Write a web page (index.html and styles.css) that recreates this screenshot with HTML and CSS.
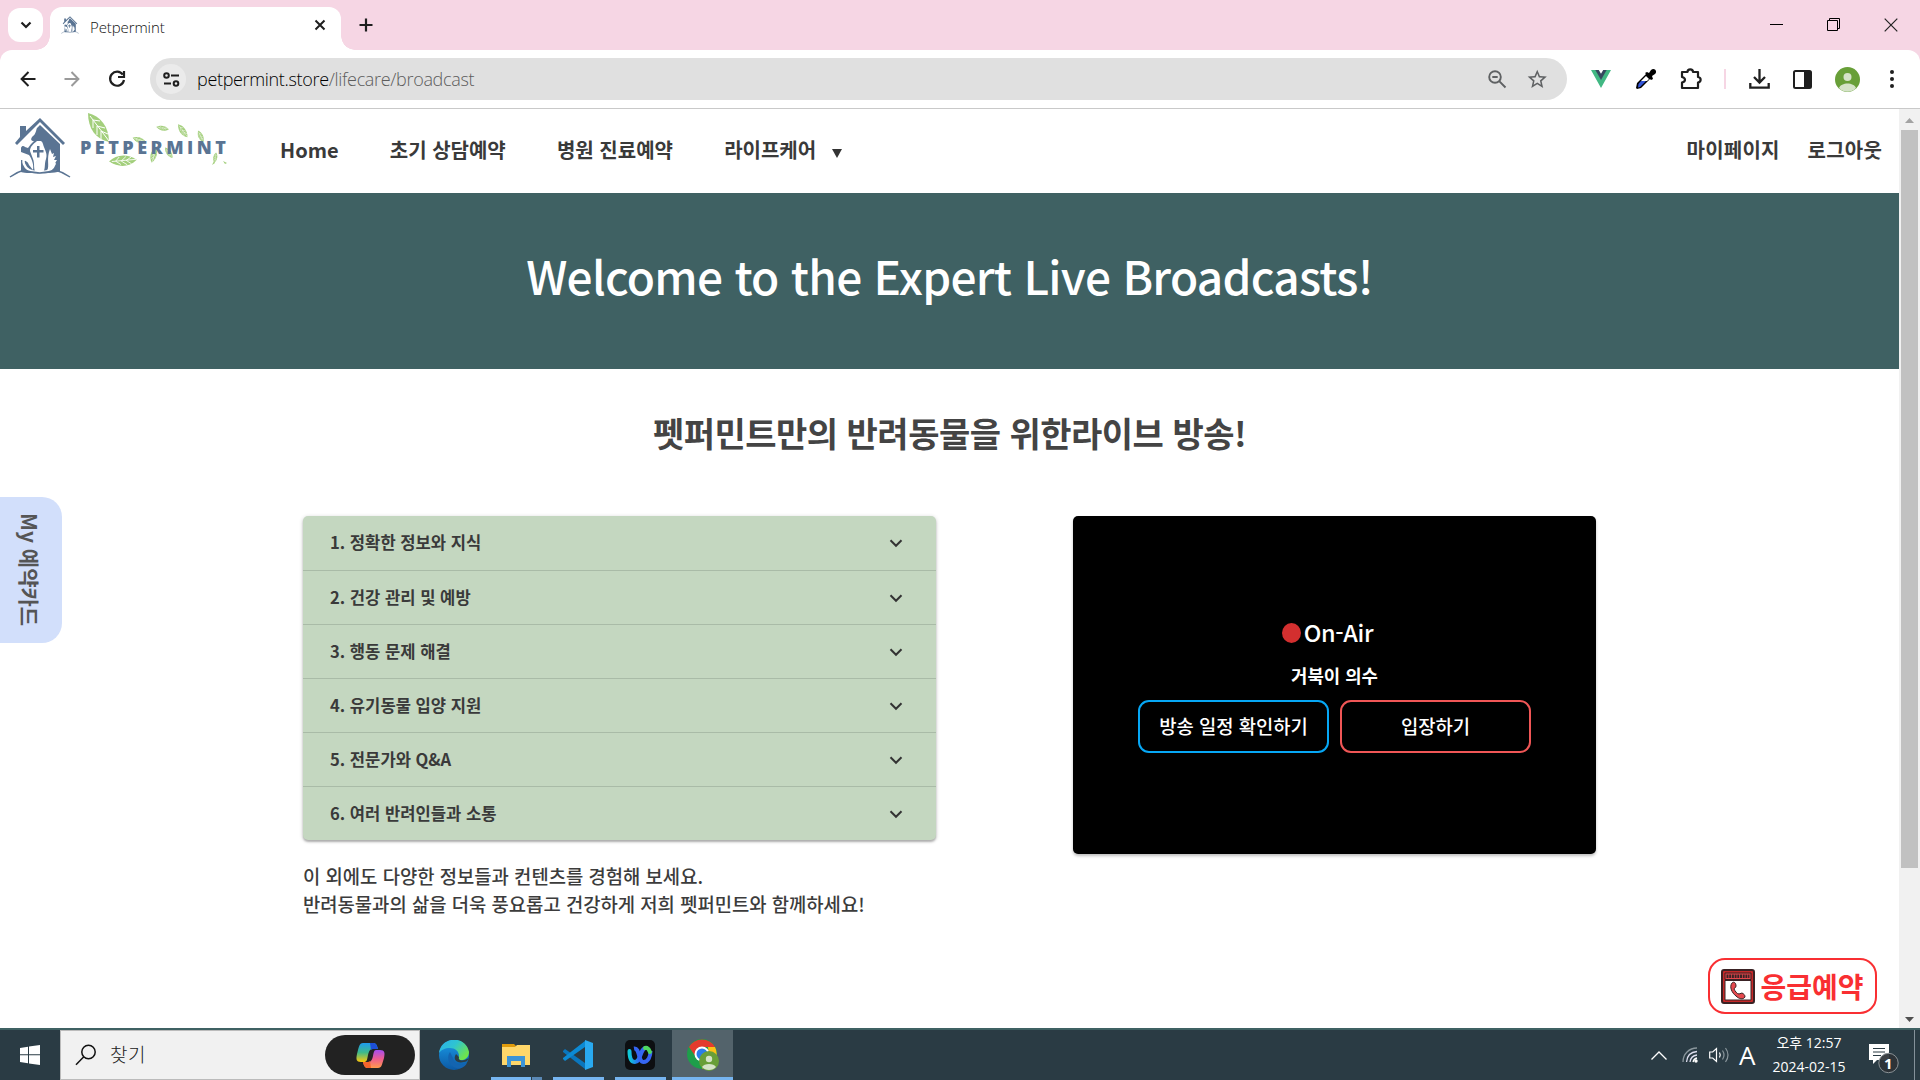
FILE: index.html
```html
<!DOCTYPE html>
<html lang="ko">
<head>
<meta charset="utf-8">
<title>Petpermint</title>
<link rel="stylesheet" href="styles.css">
</head>
<body>
<svg class="defs" width="0" height="0">
  <defs>
    <symbol id="house" viewBox="0 0 62 60">
      <path fill="#5a7493" d="M11 19V8h6v5L31 0l25 25-2 2L31 4 8 27l-2-2z"/>
      <path fill="#5a7493" d="M31 7 51 26v27c-3 3-36 3-39 1V30c1-3 3-2 4-1l3 1 3-4 3-3c-3 0-4-2-1-5 3-2 3-6 4-8z"/>
      <path fill="#fff" d="M28 23c3 0 5-1 6 3 1 5 5 9 3 15-2 5 0 12-4 14h-6c-3-4-1-9-3-14l-3-8c0-4 3-7 7-10z"/>
      <path fill="#5a7493" d="M28 28h2.500v4h4v2.500h-4v5H28v-5h-4V32h4z"/>
      <path fill="#fff" d="M12 34l8 3c3 4 5 10 4 15l-4-5c-1-4-5-5-8-5z"/>
      <path fill="none" stroke="#fff" stroke-width="2.400" d="M21 42c-3-4-8-1-6 4 2 5 7 8 13 8M33 54c6 0 11-3 13-9"/>
      <path fill="#fff" d="M41 31l2 5 2-1-1 4 3-1-2 4 3 0-3 5-3 6h-4c3-5-1-12 3-22z"/>
      <path fill="none" stroke="#5a7493" stroke-width="1.500" d="M1 59Q8 54 15 52Q31 58 46 52Q54 54 61 59"/>
    </symbol>
    <symbol id="leaf" viewBox="0 0 22 30">
      <path fill="#a3cf7c" d="M0 0C12 3 21 13 21 29 8 26 0 16 0 0z"/>
      <path fill="none" stroke="#fff" stroke-width="1" d="M2 3 21 28M5 7v8M5 7l7 1M9 13v9M9 13l8 2M13 18v8M13 18l7 3"/>
    </symbol>
    <symbol id="chev" viewBox="0 0 14 10"><path fill="none" stroke="#333" stroke-width="2" d="M1.500 2.300 7 7.800l5.500-5.500"/></symbol>
    <linearGradient id="edgeA" x1="0" y1="0" x2="1" y2=".6"><stop stop-color="#2ab0f0"/><stop offset=".5" stop-color="#2fc4d0"/><stop offset="1" stop-color="#6fe54a"/></linearGradient>
    <linearGradient id="edgeB" x1="0" y1="0" x2="0" y2="1"><stop stop-color="#1a9be8"/><stop offset="1" stop-color="#0c59a4"/></linearGradient>
    <linearGradient id="copA" x1="0" y1="0" x2="0" y2="1"><stop stop-color="#1d9bf0"/><stop offset=".5" stop-color="#3fb98a"/><stop offset="1" stop-color="#ffc808"/></linearGradient>
    <linearGradient id="copB" x1="0" y1="0" x2="0" y2="1"><stop stop-color="#a44cf0"/><stop offset=".5" stop-color="#ee5d8e"/><stop offset="1" stop-color="#ff9a4c"/></linearGradient>
    <linearGradient id="webA" x1="0" y1="0" x2="1" y2="0"><stop stop-color="#10c8d8"/><stop offset=".55" stop-color="#2a6cf5"/><stop offset="1" stop-color="#3f63f0"/></linearGradient>
  </defs>
</svg>

<header class="tabstrip">
  <button class="tab-search"><svg width="12" height="8" viewBox="0 0 12 8"><path d="M1.500 1.500 6 6l4.500-4.500" fill="none" stroke="#1f1f1f" stroke-width="2.200"/></svg></button>
  <div class="tab">
    <svg class="favicon" width="18" height="18"><use href="#house"/></svg>
    <span class="tab-title">Petpermint</span>
    <svg width="12" height="12" viewBox="0 0 12 12"><path d="M1.500 1.500l9 9m0-9l-9 9" stroke="#1f1f1f" stroke-width="2"/></svg>
  </div>
  <svg class="newtab" width="14" height="14" viewBox="0 0 14 14"><path d="M7 .5v13M.5 7h13" stroke="#1f1f1f" stroke-width="2.200"/></svg>
  <div class="winctl">
    <svg width="14" height="14" viewBox="0 0 14 14"><path d="M0 6.500h13" stroke="#000"/></svg>
    <svg width="14" height="14" viewBox="0 0 14 14"><path d="M.5 2.500h10v10H.5zM2.500 2.500v-2h10v10h-2" fill="none" stroke="#000"/></svg>
    <svg width="14" height="14" viewBox="0 0 14 14"><path d="M.7.7l12.600 12.600m0-12.600L.7 13.300" stroke="#222" stroke-width="1.200"/></svg>
  </div>
</header>

<div class="toolbar-bg">
<div class="toolbar">
  <div class="navbtns">
    <svg width="16" height="16" viewBox="0 0 16 16"><path d="M8.500 1 1.600 8l6.900 7M1.600 8H15.500" fill="none" stroke="#1f1f1f" stroke-width="2"/></svg>
    <svg width="16" height="16" viewBox="0 0 16 16"><path d="M7.500 1l6.900 7-6.900 7M14.400 8H.5" fill="none" stroke="#9a9a9a" stroke-width="2"/></svg>
    <svg width="18" height="18" viewBox="0 0 18 18"><path d="M14.800 4.600A7 7 0 1 0 16 10" fill="none" stroke="#1f1f1f" stroke-width="2.200"/><path d="M16 1v6h-6" fill="none" stroke="#1f1f1f" stroke-width="2.200"/></svg>
  </div>
  <div class="omnibox">
    <span class="siteinfo"><svg width="17" height="15" viewBox="0 0 17 15" fill="none" stroke="#1f1f1f" stroke-width="2"><circle cx="3.500" cy="3.500" r="2.300"/><path d="M8 3.500h8M1 11.500h7"/><circle cx="13" cy="11.500" r="2.300"/></svg></span>
    <span class="url">petpermint.store<span class="path">/lifecare/broadcast</span></span>
    <svg width="19" height="19" viewBox="0 0 19 19" fill="none" stroke="#5f6163" stroke-width="1.900"><circle cx="7" cy="7" r="5.800"/><path d="M11.200 11.200 17.500 17.500M4.300 7h5.400"/></svg>
    <svg class="star" width="20" height="20" viewBox="0 0 24 24"><path fill="#5f6163" d="M22 9.240l-7.190-.62L12 2 9.190 8.630 2 9.240l5.460 4.730L5.820 21 12 17.270 18.180 21l-1.630-7.030L22 9.240zM12 15.400l-3.760 2.270 1-4.280-3.320-2.880 4.380-.38L12 6.100l1.710 4.040 4.380.38-3.320 2.880 1 4.280L12 15.400z" transform="translate(-1.500 -1.500) scale(1.150)"/></svg>
  </div>
  <div class="ext">
    <svg width="22" height="20" viewBox="0 0 22 20"><path fill="#41b883" d="M1 1h5l5 9 5-9h5L11 19z"/><path fill="#35495e" d="M5.300 1h3.500L11 4.800 13.200 1h3.500L11 11z"/></svg>
    <svg width="22" height="22" viewBox="0 0 22 22"><path fill="#000" d="M12 4l2 1 2-3c3-3 7 1 4 4l-3 2 1 3-2 1-1-1L6 20l-4 1-1-1 1-5 9-9-1-1z"/><path fill="#fff" d="M11 8l3 3-2 2H6z"/><path fill="#3355d8" d="M6 13h5l-6 6-2 .500.500-3.500z"/></svg>
    <svg width="22" height="22" viewBox="0 0 22 22"><path d="M2 4h5.500c0-3.500 5.500-3.500 5.500 0h5v5c3.500.5 3.500 5 0 5.500V20H2v-5.500c4-1 4-4.500 0-5.500z" fill="none" stroke="#1f1f1f" stroke-width="2.200" stroke-linejoin="round"/></svg>
    <span class="sep"></span>
    <svg width="21" height="20" viewBox="0 0 21 20"><path d="M10.500 0v13M5 8l5.500 5.500L16 8M1.300 14v4.700h18.400V14" fill="none" stroke="#1f1f1f" stroke-width="2.300"/></svg>
    <svg width="19" height="19" viewBox="0 0 19 19"><rect x="1" y="1" width="17" height="17" rx="1.500" fill="#fff" stroke="#1f1f1f" stroke-width="2"/><path fill="#1f1f1f" d="M11 1h7v17h-7z"/></svg>
    <svg width="25" height="25" viewBox="0 0 25 25"><circle cx="12.500" cy="12.500" r="12.500" fill="#689f38"/><circle cx="12.500" cy="10" r="4" fill="#d5e3c8"/><path fill="#d5e3c8" d="M4 21c2-6 15-6 17 0-4 5-13 5-17 0z"/></svg>
    <svg class="dots" width="4" height="18" viewBox="0 0 4 18" fill="#1f1f1f"><circle cx="2" cy="2" r="2"/><circle cx="2" cy="9" r="2"/><circle cx="2" cy="16" r="2"/></svg>
  </div>
</div>
</div>

<div class="viewport">
  <div class="page">
    <nav class="nav">
      <svg class="logo" width="240" height="80" viewBox="0 0 240 80">
        <use href="#house" x="9" y="9" width="62" height="60"/>
        <use href="#leaf" x="88" y="4" width="22" height="30"/>
        <use href="#leaf" width="18" height="27" transform="translate(108 52) rotate(-58) scale(.95)"/>
        <use href="#leaf" width="8" height="14" transform="translate(155 17) rotate(-45)"/>
        <use href="#leaf" width="10" height="16" transform="translate(178 14)"/>
        <use href="#leaf" width="9" height="14" transform="translate(132 28) rotate(-35)"/>
        <use href="#leaf" width="10" height="17" transform="translate(157 37) rotate(50)"/>
        <use href="#leaf" width="8" height="12" transform="translate(198 21) rotate(10)"/>
        <use href="#leaf" width="8" height="12" transform="translate(165 38)"/>
        <use href="#leaf" width="7" height="9" transform="translate(216 43) rotate(45)"/>
        <path fill="#a3cf7c" d="M212 56l2-4 1 2zM223 52l4 2-2 1z"/>
        <text class="logo-text" x="80" y="45" textLength="146">PETPERMINT</text>
      </svg>
      <div class="menu"><a>Home</a><a>초기 상담예약</a><a>병원 진료예약</a><a class="drop">라이프케어<svg width="10" height="10" viewBox="0 0 10 10"><path fill="#333" d="M0 1h10L5 10z"/></svg></a></div>
      <div class="user"><a>마이페이지</a><a>로그아웃</a></div>
    </nav>
    <section class="hero"><h1>Welcome to the Expert Live Broadcasts!</h1></section>
    <main>
      <h2>펫퍼민트만의 반려동물을 위한라이브 방송!</h2>
      <div class="cols">
        <div class="left">
          <ul class="accordion">
            <li><span>1. 정확한 정보와 지식</span><svg width="14" height="10"><use href="#chev"/></svg></li>
            <li><span>2. 건강 관리 및 예방</span><svg width="14" height="10"><use href="#chev"/></svg></li>
            <li><span>3. 행동 문제 해결</span><svg width="14" height="10"><use href="#chev"/></svg></li>
            <li><span>4. 유기동물 입양 지원</span><svg width="14" height="10"><use href="#chev"/></svg></li>
            <li><span>5. 전문가와 Q&amp;A</span><svg width="14" height="10"><use href="#chev"/></svg></li>
            <li><span>6. 여러 반려인들과 소통</span><svg width="14" height="10"><use href="#chev"/></svg></li>
          </ul>
          <p class="note"><span>이 외에도 다양한 정보들과 컨텐츠를 경험해 보세요.</span><br><span>반려동물과의 삶을 더욱 풍요롭고 건강하게 저희 펫퍼민트와 함께하세요!</span></p>
        </div>
        <div class="player">
          <div class="onair"><i></i><span>On-Air</span></div>
          <strong class="show">거북이 의수</strong>
          <div class="btns"><button class="b1">방송 일정 확인하기</button><button class="b2">입장하기</button></div>
        </div>
      </div>
    </main>
    <div class="mycard"><span>My 예약카드</span></div>
    <button class="emergency">
      <svg width="34" height="35" viewBox="0 0 34 35"><rect x="1" y="1" width="32" height="33" rx="2" fill="#c62828" stroke="#3a2224" stroke-width="2"/><path fill="#fff" stroke="#3a2224" d="M4 11.500h26V31H4z"/><path fill="#e5484d" stroke="#3a2224" d="M4 4h26v6.500H4z"/><path stroke="#3a2224" stroke-width="3.500" stroke-dasharray="2 .700" d="M5.500 7.200h23"/><path fill="#e5484d" stroke="#3a2224" d="M11 14c2-2 4 0 4 3 0 2-2 2-2 3 1 2 3 5 5 5l3-1c2 1 3 2 3 4-2 3-6 2-9-1-4-3-7-9-4-13z"/></svg>
      <span>응급예약</span>
    </button>
  </div>
  <div class="scroll"><svg width="9" height="5" viewBox="0 0 9 5"><path fill="#a3a3a3" d="M0 5 4.500 0 9 5z"/></svg><div class="thumb"></div><svg class="down" width="9" height="5" viewBox="0 0 9 5"><path fill="#505050" d="M0 0h9L4.500 5z"/></svg></div>
</div>

<footer class="taskbar">
  <div class="start"><svg width="20" height="20" viewBox="0 0 20 20" fill="#fff"><path d="M0 3l8-1.200V9.300H0zM9 1.600 20 0v9.300H9zM0 10.300h8v7.900L0 17zM9 10.300h11V20L9 18.400z"/></svg></div>
  <div class="search">
    <svg width="22" height="22" viewBox="0 0 22 22" fill="none" stroke="#111" stroke-width="1.500"><circle cx="13.500" cy="8" r="6.700"/><path d="M8.800 12.800 1 20.800"/></svg>
    <span>찾기</span>
    <div class="copilot"><svg width="29" height="27" viewBox="0 0 29 27"><path fill="url(#copA)" d="M7 1h10c3 0 4 2 5 6h-5c-3 0-4 2-5 6-1 5-1 7-4 7H5c-5 0-5-3-4-8C3 5 3 1 7 1z"/><path fill="#1d4fd8" d="M14 1h3c3 0 4 2 5 6h-5c-1 0-2 1-2 1z"/><path fill="url(#copB)" d="M22 26H12c-3 0-4-2-5-6h5c3 0 4-2 5-6 1-5 1-6 4-6h3c5 0 5 3 4 8-2 6-2 10-6 10z"/><path fill="#f4642c" d="M15 26h-3c-3 0-4-2-5-6h5c1 0 2-1 2-1z"/></svg></div>
  </div>
  <div class="apps">
    <div class="app"><svg width="30" height="30" viewBox="0 0 30 30"><circle cx="15" cy="15" r="15" fill="url(#edgeB)"/><path fill="url(#edgeA)" d="M0 13C2-4 27-5 30 12c0 6-5 9-10 8-2-1-1-2 0-4 0-5-4-8-9-8C6 8 2 10 0 13z"/><path fill="#1464b0" d="M11 12c-5 7 1 18 11 16 3-1 5-3 6-5-6 4-13 1-14-5z"/><path fill="#2c3d46" d="M17 14c-4 6 2 11 11 7l2-3-4 2c-4 1-7 0-6-3z"/></svg></div>
    <div class="app run split"><svg width="28" height="26" viewBox="0 0 28 26"><path fill="#e09b0c" d="M0 2h12l3 3H0z"/><path fill="#ffd76a" d="M0 5h13l2-2h13v20H0z"/><path fill="#3d94d6" d="M5 25V14h18v11h-4v-6H9v6z"/></svg></div>
    <div class="app run"><svg width="30" height="30" viewBox="0 0 30 30"><path fill="#0a76bd" d="M0 11l2-2 20 14v6L0 12z"/><path fill="#0c8ad4" d="M0 19l2 2L22 7V1L0 18z"/><path fill="#29a9f0" d="M22 0l8 3v24l-8 3z"/></svg></div>
    <div class="app run"><svg width="30" height="30" viewBox="0 0 30 30"><rect width="30" height="30" rx="5" fill="#0d0f12"/><path fill="none" stroke="url(#webA)" stroke-width="4" stroke-linecap="round" d="M4.500 11c0 7 2 11 5.500 11 6 0 5-14 11-14"/><path fill="none" stroke="#3565f2" stroke-width="4" d="M9 8.500c6-1 4 13.500 9.500 13.500 5 0 7-6 7-11"/><path fill="none" stroke="#4fd860" stroke-width="4" stroke-linecap="round" d="M20 8c3-1 4 2 5 4"/></svg></div>
    <div class="app run active"><svg width="32" height="32" viewBox="0 0 32 32"><circle cx="15" cy="15" r="15" fill="#1e9e4a"/><path fill="#e33b2e" d="M2 8a15 15 0 0 1 26 0H15l-6 10z"/><path fill="#fbc116" d="M28 8a15 15 0 0 1-13 22l7-12-1-10z"/><circle cx="15" cy="15" r="7.500" fill="#fff"/><circle cx="15" cy="15" r="5.500" fill="#2a7de9"/><circle cx="22" cy="22" r="10" fill="#689f38"/><circle cx="22" cy="20" r="3.200" fill="#d5e3c8"/><path fill="#d5e3c8" d="M15 28c2-4 12-4 14 0-3 4-11 4-14 0z"/></svg></div>
  </div>
  <div class="tray">
    <svg width="16" height="9" viewBox="0 0 16 9"><path d="M.5 8.500 8 1l7.500 7.500" fill="none" stroke="#fff" stroke-width="1.300"/></svg>
    <svg class="wifi" width="17" height="16" viewBox="0 0 17 16" fill="none" stroke-width="1.300"><path stroke="#8a969c" d="M1 15C1 7 7 1 15 1"/><path stroke="#dde" d="M4.500 15C5 9 9 5 15 4.500M8 15c.5-4 3-6.500 7-7"/><path stroke="#fff" d="M11 15c.5-2 2-3.500 4-4"/><circle cx="14" cy="14" r="1.700" fill="#fff"/></svg>
    <svg class="spk" width="20" height="16" viewBox="0 0 20 16" fill="none" stroke="#fff" stroke-width="1.200"><path d="M.7 5h3L7.500 1.500v13L3.700 11h-3zM10.500 5.500q1.500 2.500 0 5"/><path stroke="#8a969c" d="M13.500 3.500q3 4.500 0 9M16.500 1q5 7 0 14"/></svg>
    <span class="ime">A</span>
    <div class="clock"><span>오후 12:57</span><span>2024-02-15</span></div>
    <div class="notif"><svg width="30" height="31" viewBox="0 0 30 31"><path fill="#fff" d="M0 1h20v16H8l-4 4v-4H0z"/><path stroke="#2a3a43" stroke-width="1.200" d="M4 5.500h12M4 9h12M4 12.500h8"/><circle cx="19.500" cy="20" r="9.700" fill="#2d3337" fill-opacity=".93" stroke="#8b9296"/></svg><span class="badge">1</span></div>
    <i class="edge"></i>
  </div>
</footer>
</body>
</html>
```

FILE: styles.css
```css
* { box-sizing: border-box; }
body {
  margin: 0; width: 1920px; height: 1080px; overflow: hidden;
  display: flex; flex-direction: column; background: #fff; color: #3c3c3c;
  font-family: "Noto Sans CJK KR", sans-serif;
}
svg { display: block; flex: none; }
.defs { position: absolute; }
button { font: inherit; color: inherit; border: 0; background: none; padding: 0; }
ul, h1, h2, p { margin: 0; padding: 0; list-style: none; }
a, span { white-space: nowrap; }

.tabstrip { flex: none; height: 50px; background: #f6d6e4; display: flex; align-items: flex-start; }
.tab-search { width: 35px; height: 34px; margin: 8px 0 0 8px; border-radius: 12px; background: #fff; display: flex; align-items: center; justify-content: center; }
.tab { position: relative; width: 291px; height: 43px; margin: 7px 0 0 7px; border-radius: 12px 12px 0 0; background: #fff; display: flex; align-items: center; padding: 0 15px 7px 11px; }
.tab::before, .tab::after { content: ""; position: absolute; bottom: 0; width: 14px; height: 14px; }
.tab::before { left: -14px; background: radial-gradient(circle at 0 0, transparent 13.5px, #fff 14px); }
.tab::after { right: -14px; background: radial-gradient(circle at 100% 0, transparent 13.5px, #fff 14px); }
.tab-title { flex: 1; margin: 3px 0 0 11px; font: 300 15px/20px "Open Sans", sans-serif; color: #111; letter-spacing: -.1px; }
.newtab { margin: 18px 0 0 18px; }
.winctl { margin: 18px 22px 0 auto; display: flex; gap: 43px; }

.toolbar-bg { flex: none; background: #f6d6e4; }
.toolbar { height: 59px; background: #fff; border-bottom: 1px solid #c9c9c9; border-radius: 12px 12px 0 0; display: flex; align-items: center; }
.navbtns { width: 150px; padding-left: 20px; display: flex; align-items: center; gap: 28px; }
.omnibox { width: 1417px; height: 42px; border-radius: 21px; background: #e0e0e0; display: flex; align-items: center; padding: 0 20px 0 6px; }
.siteinfo { width: 30px; height: 30px; border-radius: 50%; background: #ebebeb; display: flex; align-items: center; justify-content: center; }
.url { flex: 1; margin-left: 11px; font: 300 18px/24px "Open Sans", sans-serif; color: #000; letter-spacing: -.33px; }
.url .path { color: #5c5c5c; }
.star { margin-left: 20px; }
.ext { flex: 1; padding-left: 23px; display: flex; align-items: center; gap: 23px; }
.sep { width: 2px; height: 20px; margin-left: -1px; background: #f6d6e4; }
.dots { margin-left: 7px; }

.viewport { flex: none; height: 921px; display: flex; background: #fff; border-bottom: 2px solid #3f6163; }
.page { position: relative; width: 1899px; }
.nav { height: 84px; display: flex; align-items: center; font-weight: 700; font-size: 20px; line-height: 30px; color: #3a3a3a; }
.logo { align-self: flex-start; }
.logo-text { font: 800 18px "Open Sans", sans-serif; fill: #5a7493; }
.menu { margin: -2px 0 0 40px; display: flex; gap: 51.2px; }
.drop { display: flex; align-items: center; gap: 16px; }
.drop svg { margin-top: 5px; }
.user { margin: -2px 17px 0 auto; display: flex; gap: 28px; letter-spacing: .2px; }
.hero { height: 176px; background: #3f6163; display: flex; align-items: center; justify-content: center; padding-bottom: 12px; }
.hero h1 { color: #fff; font-size: 46px; font-weight: 500; line-height: 70px; white-space: nowrap; letter-spacing: -.73px; }
h2 { height: 147px; padding-top: 39px; text-align: center; font-size: 34px; font-weight: 700; line-height: 50px; color: #444; letter-spacing: -.5px; }
.cols { display: flex; gap: 137px; padding-left: 303px; }
.left { flex: none; width: 633px; }
.accordion { border-radius: 5px; background: #c4d7c0; box-shadow: 0 2px 2px rgba(0,0,0,.22), 0 1px 4px rgba(0,0,0,.2); }
.accordion li { height: 54px; padding: 0 33px 0 27px; display: flex; align-items: center; justify-content: space-between; font-size: 16.6px; font-weight: 700; color: #3a3a3a; }
.accordion li span { margin-top: -2px; }
.accordion li + li { border-top: 1px solid #a9bba7; }
.note { margin-top: 22px; font-size: 18.8px; font-weight: 500; line-height: 28px; }
.player { flex: none; width: 523px; height: 338px; background: #000; border-radius: 5px; box-shadow: 0 2px 3px rgba(0,0,0,.25); color: #fff; padding-top: 99px; display: flex; flex-direction: column; align-items: center; }
.onair { display: flex; align-items: center; gap: 3px; height: 36px; font-size: 23.4px; font-weight: 500; letter-spacing: -.3px; margin-right: 14px; }
.onair i { width: 19px; height: 20px; border-radius: 50%; background: #d32f2f; }
.onair span { margin-top: -2px; }
.show { margin-top: 10px; height: 28px; font-size: 17.8px; line-height: 28px; }
.btns { display: flex; gap: 11px; margin-top: 11px; }
.btns button { width: 191px; height: 53px; border: 2px solid #06a7f5; border-radius: 11px; font-size: 18.8px; font-weight: 500; color: #fff; padding-bottom: 3px; }
.btns .b2 { border-color: #f05656; }
.mycard { position: absolute; left: 0; top: 388px; width: 62px; height: 146px; border-radius: 0 20px 20px 0; background: #d2dffb; display: flex; align-items: center; }
.mycard span { writing-mode: vertical-rl; text-orientation: sideways; margin-left: 14px; font-size: 21px; line-height: 32px; font-weight: 700; color: #555; }
.emergency { position: absolute; left: 1708px; top: 849px; width: 169px; height: 56px; border: 2px solid #f92f32; border-radius: 17px; background: #fff; display: flex; align-items: center; justify-content: center; gap: 5px; color: #f92f32; font-size: 28px; line-height: 36px; font-weight: 700; }
.emergency span { margin-top: -1px; }
.scroll { width: 21px; background: #f1f1f1; display: flex; flex-direction: column; align-items: center; padding: 9px 0 6px; }
.thumb { width: 17px; height: 738px; margin-top: 7px; background: #c1c1c1; }
.down { margin-top: auto; }

.taskbar { flex: none; height: 50px; background: #2a3b44; display: flex; color: #fff; }
.start { width: 60px; display: flex; align-items: center; justify-content: center; }
.search { width: 360px; background: #f1f1f1; border: 1px solid #bbb; display: flex; align-items: center; padding: 0 4px 0 14px; color: #222; font-size: 19px; font-weight: 300; }
.search span { flex: 1; margin: -4px 0 0 13px; letter-spacing: .5px; }
.copilot { width: 90px; height: 40px; border-radius: 20px; background: #222; display: flex; align-items: center; justify-content: center; }
.apps { display: flex; margin-left: 3px; }
.app { width: 62px; display: flex; align-items: center; justify-content: center; border-bottom: 3px solid transparent; padding-top: 3px; }
.app.run { background: linear-gradient(#76b5f0, #76b5f0) no-repeat 50% 100% / 51px 3px border-box; }
.app.run.split { background: linear-gradient(90deg, #76b5f0 40px, #2a3b44 40px 41px, #5a88b4 41px) no-repeat 50% 100% / 51px 3px border-box; }
.app.run.active { width: 61px; margin-left: 1px; background: linear-gradient(#53636b 47px, #76b5f0 47px) border-box; }
.tray { margin-left: auto; display: flex; align-items: center; }
.wifi { margin-left: 15px; }
.spk { margin-left: 10px; }
.ime { margin-left: 10px; width: 17px; font: 26px/40px "Open Sans", sans-serif; }
.clock { width: 78px; margin-left: 14px; display: flex; flex-direction: column; align-items: center; font: 14px/24px "Open Sans", "Noto Sans CJK KR", sans-serif; }
.notif { position: relative; margin: 6px 0 0 21px; }
.badge { position: absolute; left: 15px; top: 10px; font: 700 15px/20px "Open Sans", sans-serif; }
.edge { width: 1px; height: 50px; margin: 0 5px 0 15px; background: #84919a; }
```
